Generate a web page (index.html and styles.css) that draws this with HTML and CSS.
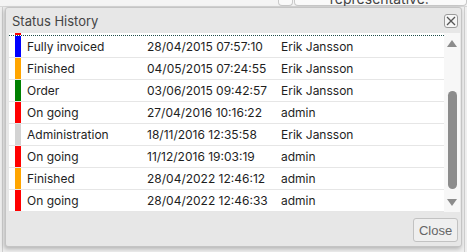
FILE: index.html
```html
<!DOCTYPE html>
<html lang="en">

<head>
    <meta charset="UTF-8">
    <meta name="viewport" content="width=device-width, initial-scale=1.0">
    <title>Status History</title>
    <link rel="stylesheet" href="styles.css">
</head>

<body>
    <div class="page">
        <div class="topbar">
            <div class="field field-small"></div>
            <div class="field field-wide">
                <span class="field-label">representative:</span>
            </div>
        </div>
        <div class="page-body">
            <div class="side-left"></div>
            <div class="side-right"></div>
        </div>
    </div>

    <div class="dialog">
        <div class="dialog-header">
            <span class="dialog-title">Status History</span>
            <button class="icon-close" aria-label="Close">
                <svg width="10" height="10" viewBox="0 0 10 10">
                    <path d="M1 1 L9 9 M9 1 L1 9" stroke="#555" stroke-width="1.3" fill="none" />
                </svg>
            </button>
        </div>

        <div class="dialog-body">
            <div class="list">
                <div class="row-partial"><span class="bar red"></span></div>
                <div class="row focused">
                    <span class="bar blue"></span>
                    <span>Fully invoiced</span>
                    <span>28/04/2015 07:57:10</span>
                    <span>Erik Jansson</span>
                </div>
                <div class="row">
                    <span class="bar orange"></span>
                    <span>Finished</span>
                    <span>04/05/2015 07:24:55</span>
                    <span>Erik Jansson</span>
                </div>
                <div class="row">
                    <span class="bar green"></span>
                    <span>Order</span>
                    <span>03/06/2015 09:42:57</span>
                    <span>Erik Jansson</span>
                </div>
                <div class="row">
                    <span class="bar red"></span>
                    <span>On going</span>
                    <span>27/04/2016 10:16:22</span>
                    <span>admin</span>
                </div>
                <div class="row">
                    <span class="bar grey"></span>
                    <span>Administration</span>
                    <span>18/11/2016 12:35:58</span>
                    <span>Erik Jansson</span>
                </div>
                <div class="row">
                    <span class="bar red"></span>
                    <span>On going</span>
                    <span>11/12/2016 19:03:19</span>
                    <span>admin</span>
                </div>
                <div class="row">
                    <span class="bar orange"></span>
                    <span>Finished</span>
                    <span>28/04/2022 12:46:12</span>
                    <span>admin</span>
                </div>
                <div class="row">
                    <span class="bar red"></span>
                    <span>On going</span>
                    <span>28/04/2022 12:46:33</span>
                    <span>admin</span>
                </div>
            </div>

            <div class="scrollbar">
                <div class="scroll-arrow">
                    <svg width="10" height="7" viewBox="0 0 10 7">
                        <polygon points="5,0 10,7 0,7" fill="#8c8c8c" />
                    </svg>
                </div>
                <div class="scroll-track">
                    <div class="scroll-thumb"></div>
                </div>
                <div class="scroll-arrow">
                    <svg width="10" height="7" viewBox="0 0 10 7">
                        <polygon points="0,0 10,0 5,7" fill="#8c8c8c" />
                    </svg>
                </div>
            </div>
        </div>

        <div class="dialog-footer">
            <button class="btn-close">Close</button>
        </div>
    </div>
</body>

</html>
```

FILE: styles.css
```css
body {
    margin: 0;
    padding: 0;
    width: 467px;
    height: 252px;
    overflow: hidden;
    background-color: #efefef;
    font-family: Inter, "Noto Sans", sans-serif;
    color: #1e1e1e;
}

/* Page behind the dialog */
.page {
    display: flex;
    flex-direction: column;
    height: 100%;
}

.topbar {
    height: 6px;
    display: flex;
    overflow: hidden;
    border-bottom: 1px solid #d6d6d6;
    padding-left: 278px;
    background-color: #f4f4f4;
}

.field {
    border: 1px solid #c9c9c9;
    border-top: none;
    border-radius: 0 0 4px 4px;
    background-color: #fafafa;
}

.field-small {
    width: 15px;
}

.field-wide {
    width: 160px;
    margin-left: 1px;
    display: flex;
    align-items: flex-end;
    padding-left: 35px;
}

.field-label {
    font-size: 14px;
    line-height: 16px;
    color: #444;
    margin-bottom: -2px;
}

.page-body {
    flex: 1;
    display: flex;
    justify-content: space-between;
}

.side-left {
    width: 2px;
    border-right: 1px solid #cfcfcf;
}

.side-right {
    width: 2px;
    border-left: 1px solid #cfcfcf;
}

/* Dialog */
.dialog {
    position: absolute;
    left: 5px;
    top: 7px;
    width: 457px;
    height: 240px;
    box-sizing: border-box;
    border: 1px solid #c4c4c4;
    border-radius: 3px;
    background-color: #e7e7e7;
    box-shadow: -1px 2px 4px rgba(0, 0, 0, 0.25);
    display: flex;
    flex-direction: column;
}

.dialog-header {
    height: 25px;
    display: flex;
    align-items: center;
    justify-content: space-between;
    padding: 0 3px 0 6px;
}

.dialog-title {
    font-size: 13px;
    color: #444;
}

.icon-close {
    width: 14px;
    height: 14px;
    padding: 0;
    border: 1px solid #9a9a9a;
    border-radius: 3px;
    background-color: #f6f6f6;
    display: flex;
    justify-content: center;
    align-items: center;
}

.dialog-body {
    height: 179px;
    margin: 0 1px 0 3px;
    display: flex;
    background-color: #fff;
}

.list {
    flex: 1;
    overflow: hidden;
}

.row-partial {
    height: 2px;
    padding-left: 6px;
    display: flex;
    border-bottom: 1px dotted #1f4f4a;
}

.row {
    height: 22px;
    box-sizing: border-box;
    border-bottom: 1px solid #e6e6e6;
    display: grid;
    grid-template-columns: 6px 126px 134px 1fr;
    align-items: center;
    padding-left: 6px;
    font-size: 12px;
}

.row .bar {
    align-self: stretch;
}

.bar {
    width: 6px;
}

.row span:nth-child(2) {
    padding-left: 6px;
}

.red { background-color: #ff0000; }
.blue { background-color: #0000ff; }
.orange { background-color: #ffa500; }
.green { background-color: #008000; }
.grey { background-color: #d3d3d3; }

/* Scrollbar */
.scrollbar {
    width: 16px;
    background-color: #f7f7f7;
    display: flex;
    flex-direction: column;
}

.scroll-arrow {
    height: 20px;
    display: flex;
    justify-content: center;
    align-items: center;
}

.scroll-track {
    flex: 1;
    display: flex;
    flex-direction: column;
    align-items: center;
}

.scroll-thumb {
    margin-top: 38px;
    width: 9px;
    height: 98px;
    border-radius: 5px;
    background-color: #8c8c8c;
}

.dialog-footer {
    flex: 1;
    display: flex;
    justify-content: flex-end;
    align-items: flex-start;
    padding: 6px 3px 0 0;
}

.btn-close {
    width: 45px;
    height: 24px;
    padding: 0;
    border: 1px solid #c2c2c2;
    border-radius: 3px;
    background-color: #efefef;
    font-family: "Liberation Sans", Arial, sans-serif;
    font-size: 13px;
    color: #666;
}
```
